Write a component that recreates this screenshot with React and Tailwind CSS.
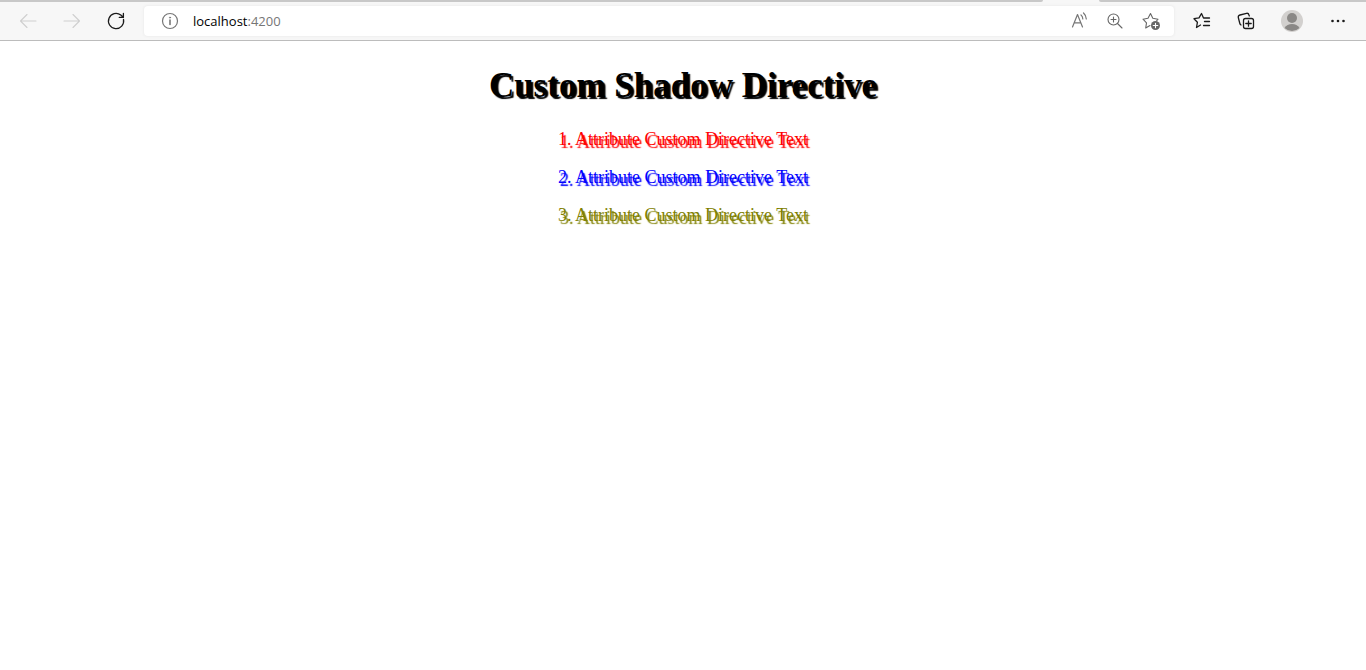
import React from "react";

const stroke = { fill: "none", stroke: "currentColor", strokeLinecap: "round", strokeLinejoin: "round" };

function IconButton({ label, className = "", disabled = false, children }) {
  return (
    <button type="button" aria-label={label} disabled={disabled} className={`flex h-8 shrink-0 items-center justify-center ${className}`}>
      {children}
    </button>
  );
}

function Glyph({ children, width = 1 }) {
  return (
    <svg width="20" height="20" viewBox="0 0 20 20" strokeWidth={width} {...stroke}>
      {children}
    </svg>
  );
}

function TabStrip() {
  return (
    <div className="flex h-0.5 bg-[#f7f7f7]">
      <div className="flex-1 rounded-br-sm bg-[#c8c8c8]" />
      <div className="w-14" />
      <div className="w-[267px] rounded-bl-sm bg-[#c8c8c8]" />
    </div>
  );
}

function Toolbar() {
  return (
    <nav className="flex h-[39px] items-center border-b border-[#bcbcbc] bg-[#f7f7f7] pl-1.5">
      <IconButton label="Back" disabled className="w-11 text-[#cfcfcf]">
        <Glyph width={1.1}><path d="M18 10H2.5M9 3.5L2.5 10L9 16.5" /></Glyph>
      </IconButton>
      <IconButton label="Forward" disabled className="w-11 text-[#cfcfcf]">
        <Glyph width={1.1}><path d="M2 10h15.5M11 3.5L17.5 10L11 16.5" /></Glyph>
      </IconButton>
      <IconButton label="Refresh" className="w-11 text-[#1b1b1b]">
        <Glyph width={1.3}>
          <path d="M17.500 8.500A7.600 7.600 0 1 1 14.800 4.100L17 6M17.400 2.500V6.400H13.300" />
        </Glyph>
      </IconButton>
      <div className="ml-1.5 flex h-[30px] min-w-0 flex-1 items-center rounded bg-white pl-4 shadow-[0_0_3px_#e4e4e4]">
        <IconButton label="Site information" className="text-[#767676]">
          <Glyph width={1.2}>
            <circle cx="10" cy="10" r="7.500" />
            <path d="M10 9v4.500" strokeWidth="1.600" />
            <circle cx="10" cy="6.600" r="0.600" fill="currentColor" strokeWidth="0.700" />
          </Glyph>
        </IconButton>
        <a href="http://localhost:4200" className="ml-[13px] flex-1 font-['Open_Sans',sans-serif] text-[13px] leading-5 text-black">
          localhost<span className="text-[#767676]">:4200</span>
        </a>
        <IconButton label="Read aloud" className="w-9 text-[#767676]">
          <Glyph width={1.2}>
            <path d="M2.500 16L7.500 3.500L12.500 16M4.300 11.800H10.700" />
            <path d="M11 4Q12.800 5.500 12.800 8M13.500 2Q16.300 4.500 16.300 8" />
          </Glyph>
        </IconButton>
        <IconButton label="Zoom" className="w-9 text-[#666666]">
          <Glyph width={1.1}>
            <circle cx="7.500" cy="8.500" r="5.500" />
            <path d="M11.500 12.500L16 17M7.500 6v5M5 8.500h5" />
          </Glyph>
        </IconButton>
        <IconButton label="Add to favorites" className="mr-1 w-9 text-[#666666]">
          <Glyph width={1.1}>
            <path d="M8 14.500L3.700 17L4.500 11.800L1 8.200L6 7.300L8.500 2.500L10.800 7.300L16 8.200L14.500 10" />
            <circle cx="13.500" cy="14.500" r="4.500" fill="currentColor" stroke="none" />
            <path d="M13.500 12.200v4.600M11.200 14.500h4.600" stroke="#fff" />
          </Glyph>
        </IconButton>
      </div>
      <IconButton label="Favorites" className="ml-1.5 w-11 text-[#1b1b1b]">
        <Glyph width={1.3}>
          <path d="M8.500 14L4.500 16.500L5.400 11.300L2 7.700L7 6.900L9.500 2.500L11.500 7H17.500M12.500 10.500h5M11.500 14.500h6" />
        </Glyph>
      </IconButton>
      <IconButton label="Collections" className="w-11 text-[#1b1b1b]">
        <Glyph width={1.3}>
          <path d="M5 14Q4 13.500 3.700 12L2.300 6.500Q2 4.500 4 4L10.500 2.300Q12.500 2 13 4L13.300 5" />
          <rect x="7.500" y="7.500" width="10" height="10" rx="2" />
          <path d="M12.500 9.800v5.400M9.800 12.500h5.400" />
        </Glyph>
      </IconButton>
      <IconButton label="Profile" className="w-12">
        <svg width="22" height="22" viewBox="0 0 22 22">
          <circle cx="11" cy="11" r="11" fill="#d2d0ce" />
          <circle cx="11" cy="8" r="5" fill="#8a8886" />
          <path d="M3.500 18Q6 14 11 14T18.500 18A11 11 0 0 1 3.500 18Z" fill="#8a8886" />
        </svg>
      </IconButton>
      <IconButton label="Settings and more" className="mr-1.5 w-11 text-[#1b1b1b]">
        <Glyph>
          <g fill="currentColor" stroke="none">
            <circle cx="4.500" cy="10" r="1.300" />
            <circle cx="10" cy="10" r="1.300" />
            <circle cx="15.500" cy="10" r="1.300" />
          </g>
        </Glyph>
      </IconButton>
    </nav>
  );
}

const lines = [
  { text: "1. Attribute Custom Directive Text", style: "text-[#ff0000] [text-shadow:2px_3px_1px_#ff0000]" },
  { text: "2. Attribute Custom Directive Text", style: "text-[#0000ff] [text-shadow:2px_3px_1px_#0000ff]" },
  { text: "3. Attribute Custom Directive Text", style: "text-[#808000] [text-shadow:2px_3px_1px_#808000]" },
];

export default function App() {
  return (
    <div className="min-h-screen bg-white">
      <header>
        <TabStrip />
        <Toolbar />
      </header>
      <main className="flex flex-col items-center px-2 pt-[25px] text-center font-['Liberation_Serif',serif]">
        <h1 className="text-[35px] leading-10 font-bold text-black [text-shadow:2px_2px_1px_#000]">Custom Shadow Directive</h1>
        <div className="mt-[23px] flex flex-col gap-[18px]">
          {lines.map(({ text, style }) => (
            <p key={text} className={`text-[18px] leading-5 ${style}`}>{text}</p>
          ))}
        </div>
      </main>
    </div>
  );
}
